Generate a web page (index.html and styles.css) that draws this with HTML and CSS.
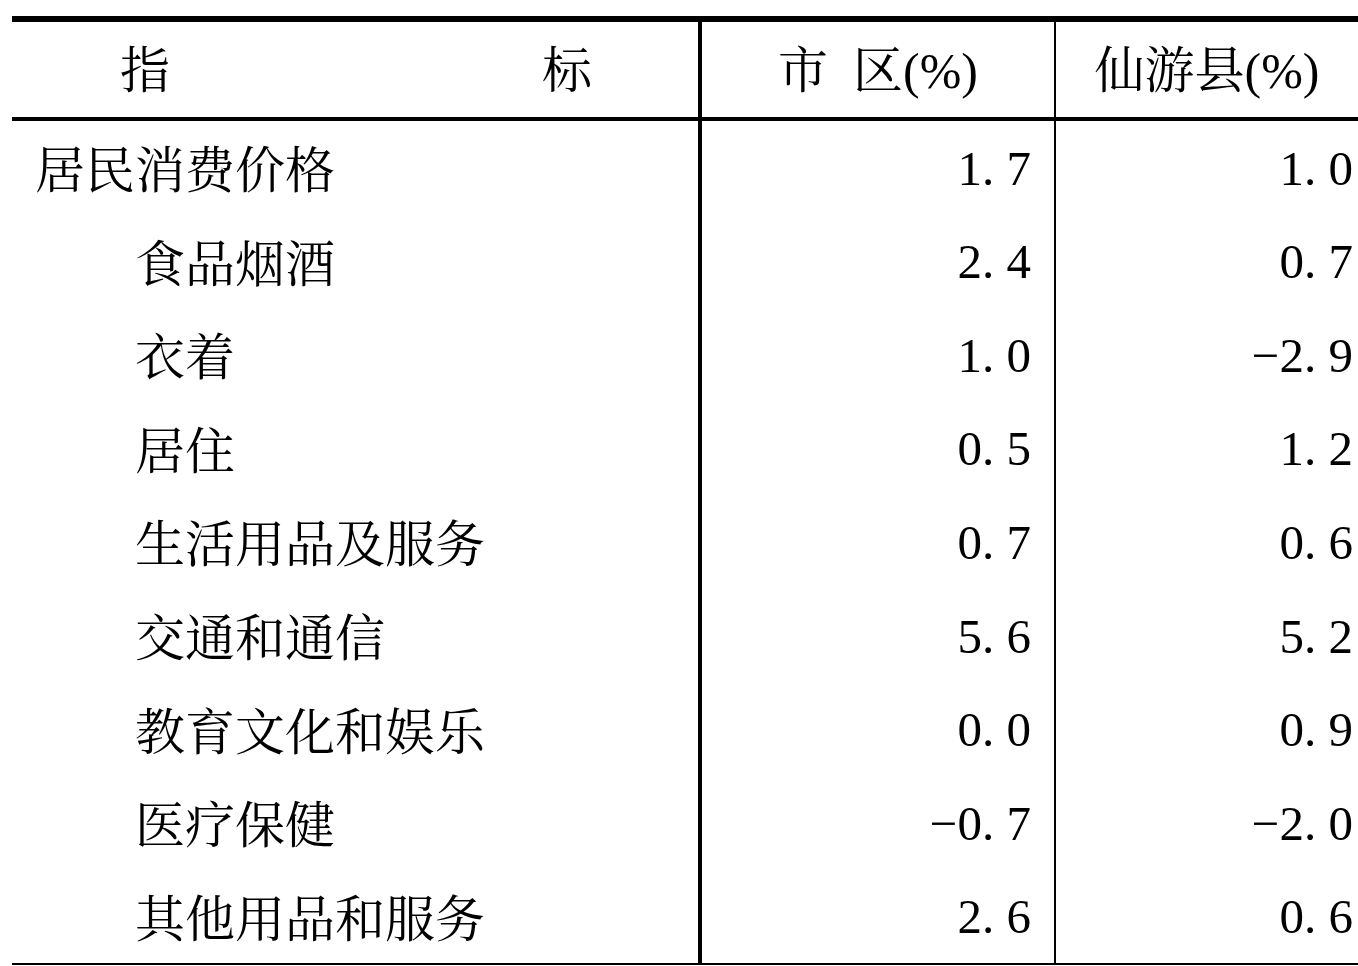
FILE: index.html
```html
<!DOCTYPE html>
<html lang="zh-CN">
<head>
<meta charset="utf-8">
<title>居民消费价格</title>
<link rel="stylesheet" href="styles.css">
</head>
<body>
<div class="sheet">
  <div class="row head">
    <div class="cell c1 spread"><span>指</span><span>标</span></div>
    <div class="cell c2 center">市&ensp;区(%)</div>
    <div class="cell c3 center">仙游县(%)</div>
  </div>
  <div class="body">
    <div class="row">
      <div class="cell c1 lv1">居民消费价格</div>
      <div class="cell c2 num">1<span class="pt">.</span>7</div>
      <div class="cell c3 num">1<span class="pt">.</span>0</div>
    </div>
    <div class="row">
      <div class="cell c1 lv2">食品烟酒</div>
      <div class="cell c2 num">2<span class="pt">.</span>4</div>
      <div class="cell c3 num">0<span class="pt">.</span>7</div>
    </div>
    <div class="row">
      <div class="cell c1 lv2">衣着</div>
      <div class="cell c2 num">1<span class="pt">.</span>0</div>
      <div class="cell c3 num">−2<span class="pt">.</span>9</div>
    </div>
    <div class="row">
      <div class="cell c1 lv2">居住</div>
      <div class="cell c2 num">0<span class="pt">.</span>5</div>
      <div class="cell c3 num">1<span class="pt">.</span>2</div>
    </div>
    <div class="row">
      <div class="cell c1 lv2">生活用品及服务</div>
      <div class="cell c2 num">0<span class="pt">.</span>7</div>
      <div class="cell c3 num">0<span class="pt">.</span>6</div>
    </div>
    <div class="row">
      <div class="cell c1 lv2">交通和通信</div>
      <div class="cell c2 num">5<span class="pt">.</span>6</div>
      <div class="cell c3 num">5<span class="pt">.</span>2</div>
    </div>
    <div class="row">
      <div class="cell c1 lv2">教育文化和娱乐</div>
      <div class="cell c2 num">0<span class="pt">.</span>0</div>
      <div class="cell c3 num">0<span class="pt">.</span>9</div>
    </div>
    <div class="row">
      <div class="cell c1 lv2">医疗保健</div>
      <div class="cell c2 num">−0<span class="pt">.</span>7</div>
      <div class="cell c3 num">−2<span class="pt">.</span>0</div>
    </div>
    <div class="row">
      <div class="cell c1 lv2">其他用品和服务</div>
      <div class="cell c2 num">2<span class="pt">.</span>6</div>
      <div class="cell c3 num">0<span class="pt">.</span>6</div>
    </div>
  </div>
</div>
</body>
</html>
```
FILE: styles.css
```css
html, body {
  margin: 0;
  padding: 0;
  background: #fff;
}
body {
  padding: 16px 0 0 12px;
  overflow: hidden;
  font-family: "Liberation Serif", "Noto Serif CJK SC", "Noto Sans CJK SC", serif;
  font-size: 49px;
  color: #000;
}
.sheet {
  width: 1346px;
  border-top: 6px solid #000;
  border-bottom: 2px solid #000;
}
.row {
  display: grid;
  grid-template-columns: 686px 356px 1fr;
}
.head {
  height: 99px;
  border-bottom: 4px solid #000;
  box-sizing: border-box;
}
.head .cell {
  font-size: 50px;
  padding-top: 2px;
}
.body {
  height: 842px;
  display: grid;
  grid-template-rows: repeat(9, 1fr);
}
.cell {
  display: flex;
  align-items: center;
  box-sizing: border-box;
  line-height: 1;
  white-space: nowrap;
}
.c2 {
  border-left: 4px solid #000;
}
.c3 {
  border-left: 2px solid #000;
}
.spread {
  justify-content: space-between;
  padding: 0 106px 0 108px;
}
.head .spread {
  padding: 2px 106px 0 108px;
}
.center {
  justify-content: center;
}
.lv1,
.lv2 {
  font-size: 50px;
  padding-top: 7px;
}
.lv1 {
  padding-left: 23px;
}
.lv2 {
  padding-left: 123px;
}
.num {
  justify-content: flex-end;
  font-family: "Liberation Serif", serif;
  padding-top: 1px;
}
.c2.num {
  padding-right: 23px;
}
.c3.num {
  padding-right: 5px;
}
.pt {
  display: inline-block;
  width: 0.5em;
  text-align: left;
}
```
